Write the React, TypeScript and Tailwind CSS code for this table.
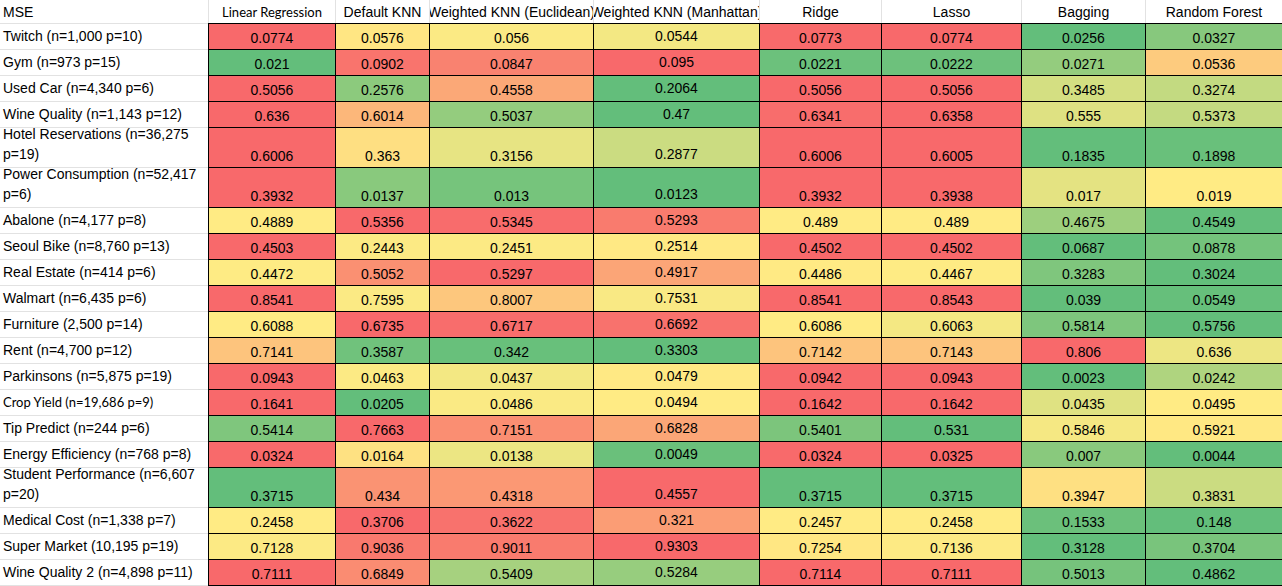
import React from "react";

const headers = [
  "Linear Regression",
  "Default KNN",
  "Weighted KNN (Euclidean)",
  "Weighted KNN (Manhattan)",
  "Ridge",
  "Lasso",
  "Bagging",
  "Random Forest",
];

type Row = { label: string; vals: string[]; tall?: boolean; small?: boolean };

const rows: Row[] = [
  { label: "Twitch (n=1,000 p=10)", vals: ["0.0774", "0.0576", "0.056", "0.0544", "0.0773", "0.0774", "0.0256", "0.0327"] },
  { label: "Gym (n=973 p=15)", vals: ["0.021", "0.0902", "0.0847", "0.095", "0.0221", "0.0222", "0.0271", "0.0536"] },
  { label: "Used Car (n=4,340 p=6)", vals: ["0.5056", "0.2576", "0.4558", "0.2064", "0.5056", "0.5056", "0.3485", "0.3274"] },
  { label: "Wine Quality (n=1,143 p=12)", vals: ["0.636", "0.6014", "0.5037", "0.47", "0.6341", "0.6358", "0.555", "0.5373"] },
  { label: "Hotel Reservations (n=36,275 p=19)", tall: true, vals: ["0.6006", "0.363", "0.3156", "0.2877", "0.6006", "0.6005", "0.1835", "0.1898"] },
  { label: "Power Consumption (n=52,417 p=6)", tall: true, vals: ["0.3932", "0.0137", "0.013", "0.0123", "0.3932", "0.3938", "0.017", "0.019"] },
  { label: "Abalone (n=4,177 p=8)", vals: ["0.4889", "0.5356", "0.5345", "0.5293", "0.489", "0.489", "0.4675", "0.4549"] },
  { label: "Seoul Bike (n=8,760 p=13)", vals: ["0.4503", "0.2443", "0.2451", "0.2514", "0.4502", "0.4502", "0.0687", "0.0878"] },
  { label: "Real Estate (n=414 p=6)", vals: ["0.4472", "0.5052", "0.5297", "0.4917", "0.4486", "0.4467", "0.3283", "0.3024"] },
  { label: "Walmart (n=6,435 p=6)", vals: ["0.8541", "0.7595", "0.8007", "0.7531", "0.8541", "0.8543", "0.039", "0.0549"] },
  { label: "Furniture (2,500 p=14)", vals: ["0.6088", "0.6735", "0.6717", "0.6692", "0.6086", "0.6063", "0.5814", "0.5756"] },
  { label: "Rent (n=4,700 p=12)", vals: ["0.7141", "0.3587", "0.342", "0.3303", "0.7142", "0.7143", "0.806", "0.636"] },
  { label: "Parkinsons (n=5,875 p=19)", vals: ["0.0943", "0.0463", "0.0437", "0.0479", "0.0942", "0.0943", "0.0023", "0.0242"] },
  { label: "Crop Yield (n=19,686 p=9)", small: true, vals: ["0.1641", "0.0205", "0.0486", "0.0494", "0.1642", "0.1642", "0.0435", "0.0495"] },
  { label: "Tip Predict (n=244 p=6)", vals: ["0.5414", "0.7663", "0.7151", "0.6828", "0.5401", "0.531", "0.5846", "0.5921"] },
  { label: "Energy Efficiency (n=768 p=8)", vals: ["0.0324", "0.0164", "0.0138", "0.0049", "0.0324", "0.0325", "0.007", "0.0044"] },
  { label: "Student Performance (n=6,607 p=20)", tall: true, vals: ["0.3715", "0.434", "0.4318", "0.4557", "0.3715", "0.3715", "0.3947", "0.3831"] },
  { label: "Medical Cost (n=1,338 p=7)", vals: ["0.2458", "0.3706", "0.3622", "0.321", "0.2457", "0.2458", "0.1533", "0.148"] },
  { label: "Super Market (10,195 p=19)", vals: ["0.7128", "0.9036", "0.9011", "0.9303", "0.7254", "0.7136", "0.3128", "0.3704"] },
  { label: "Wine Quality 2 (n=4,898 p=11)", vals: ["0.7111", "0.6849", "0.5409", "0.5284", "0.7114", "0.7111", "0.5013", "0.4862"] },
];

const GREEN = [99, 190, 123];
const YELLOW = [255, 235, 132];
const RED = [248, 105, 107];

function mix(a: number[], b: number[], t: number) {
  const c = a.map((x, i) => Math.round(x + (b[i] - x) * t));
  return `rgb(${c[0]},${c[1]},${c[2]})`;
}

function rowColors(vals: string[]) {
  const nums = vals.map(Number);
  const sorted = [...nums].sort((a, b) => a - b);
  const min = sorted[0];
  const max = sorted[sorted.length - 1];
  const pos = (sorted.length - 1) * 0.5;
  const lo = Math.floor(pos);
  const hi = Math.ceil(pos);
  const mid = sorted[lo] + (sorted[hi] - sorted[lo]) * (pos - lo);
  return nums.map((v) => {
    if (v <= mid) {
      const t = mid === min ? 1 : (v - min) / (mid - min);
      return mix(GREEN, YELLOW, t);
    }
    const t = max === mid ? 0 : (v - mid) / (max - mid);
    return mix(YELLOW, RED, t);
  });
}

export default function App() {
  return (
    <div className="w-[1282px] h-[586px] bg-white overflow-hidden font-['Liberation_Sans',Arial,sans-serif] text-[14px] text-black">
      <div className="grid grid-cols-[208px_127px_94px_164px_166px_122px_140px_124px_137px]">
        {/* Header row */}
        <div className="h-[23px] flex items-end pl-[3px] pb-[3px] leading-[16px]">MSE</div>
        {headers.map((h, i) => (
          <div
            key={h}
            className={
              "h-[23px] border-l border-[#e2e2e2] flex items-end justify-center overflow-hidden whitespace-nowrap pb-[3px] leading-[16px] " +
              (i === 0 ? "font-['Lato',sans-serif] text-[13px]" : "")
            }
          >
            {h}
          </div>
        ))}
        {rows.map((r, ri) => {
          const colors = rowColors(r.vals);
          const last = ri === rows.length - 1;
          const h = r.tall ? "h-[40px]" : last ? "h-[27px]" : "h-[26px]";
          return (
            <React.Fragment key={r.label}>
              <div
                className={
                  h +
                  " border-t border-[#e2e2e2] flex items-end pl-[3px] pb-[3px] leading-[20px] overflow-hidden " +
                  (last ? "border-b " : "") +
                  (r.small ? "font-['Lato',sans-serif] text-[13px]" : "")
                }
              >
                <span>{r.label}</span>
              </div>
              {r.vals.map((v, ci) => (
                <div
                  key={ci}
                  className={
                    h +
                    " border-l border-t border-black flex items-end justify-center leading-[16px] " +
                    (last ? "border-b " : "") +
                    (ci === 3 ? "pb-[5px]" : "pb-[3px]")
                  }
                  style={{ backgroundColor: colors[ci] }}
                >
                  {v}
                </div>
              ))}
            </React.Fragment>
          );
        })}
      </div>
    </div>
  );
}
